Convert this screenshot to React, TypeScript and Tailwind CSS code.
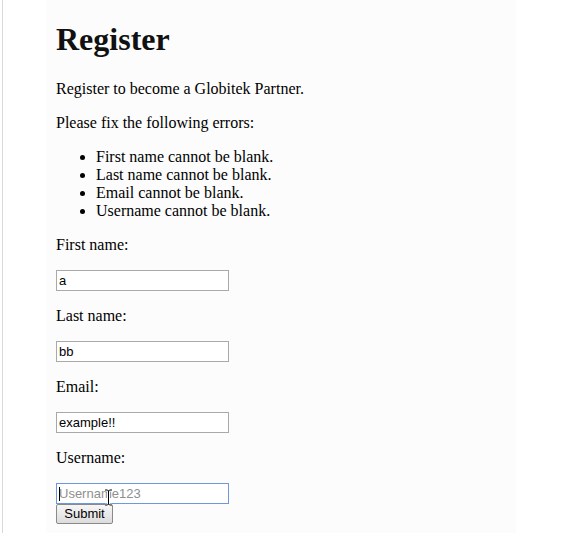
export default function App() {
  const errors = [
    "First name cannot be blank.",
    "Last name cannot be blank.",
    "Email cannot be blank.",
    "Username cannot be blank.",
  ]

  const field =
    "mt-[16px] block h-[21px] w-[173px] border border-[#a9a9a9] bg-white px-[2px] font-['Liberation_Sans',sans-serif] text-[13px] text-black outline-none"

  return (
    <div className="min-h-[533px] bg-white">
      <div className="ml-[2px] min-h-[533px] border-l border-[#d9d9d9]">
        <div className="ml-[43px] w-[470px] min-h-[533px] bg-[#fcfcfc] pl-[10px] pt-[22px] font-['Liberation_Serif',serif] text-[16px] leading-[18px] text-black">
          <h1 className="text-[32px] font-bold leading-[35px] text-[#111]">Register</h1>
          <p className="mt-[23px]">Register to become a Globitek Partner.</p>
          <p className="mt-[16px]">Please fix the following errors:</p>
          <ul className="mt-[16px] list-disc pl-[40px]">
            {errors.map((e) => (
              <li key={e}>{e}</li>
            ))}
          </ul>

          <form className="mt-[16px]">
            <p>First name:</p>
            <input readOnly value="a" className={field} />
            <p className="mt-[16px]">Last name:</p>
            <input readOnly value="bb" className={field} />
            <p className="mt-[16px]">Email:</p>
            <input readOnly value="example!!" className={field} />
            <p className="mt-[16px]">Username:</p>
            <div className="relative mt-[16px] w-[173px]">
              <input
                readOnly
                placeholder="Username123"
                className="block h-[21px] w-[173px] border border-[#6f97df] bg-white px-[2px] font-['Liberation_Sans',sans-serif] text-[13px] text-black outline-none placeholder:text-[#8f8f8f]"
              />
              <span className="absolute left-[3px] top-[4px] h-[14px] w-px bg-black" />
              <svg className="absolute left-[48px] top-[6px]" width="9" height="17" viewBox="0 0 9 17">
                <path d="M1 1h2.5l1 1 1-1H8M4.5 2v13M1 16h2.5l1-1 1 1H8" fill="none" stroke="#fff" strokeWidth="2.5" />
                <path d="M1 1h2.5l1 1 1-1H8M4.5 2v13M1 16h2.5l1-1 1 1H8" fill="none" stroke="#000" strokeWidth="1" />
              </svg>
            </div>
            <button
              type="button"
              className="block h-[20px] w-[57px] rounded-[2px] border border-[#8a8a8a] bg-gradient-to-b from-[#f6f6f6] to-[#dcdcdc] font-['Liberation_Sans',sans-serif] text-[13px] leading-[18px] text-black"
            >
              Submit
            </button>
          </form>
        </div>
      </div>
    </div>
  )
}
